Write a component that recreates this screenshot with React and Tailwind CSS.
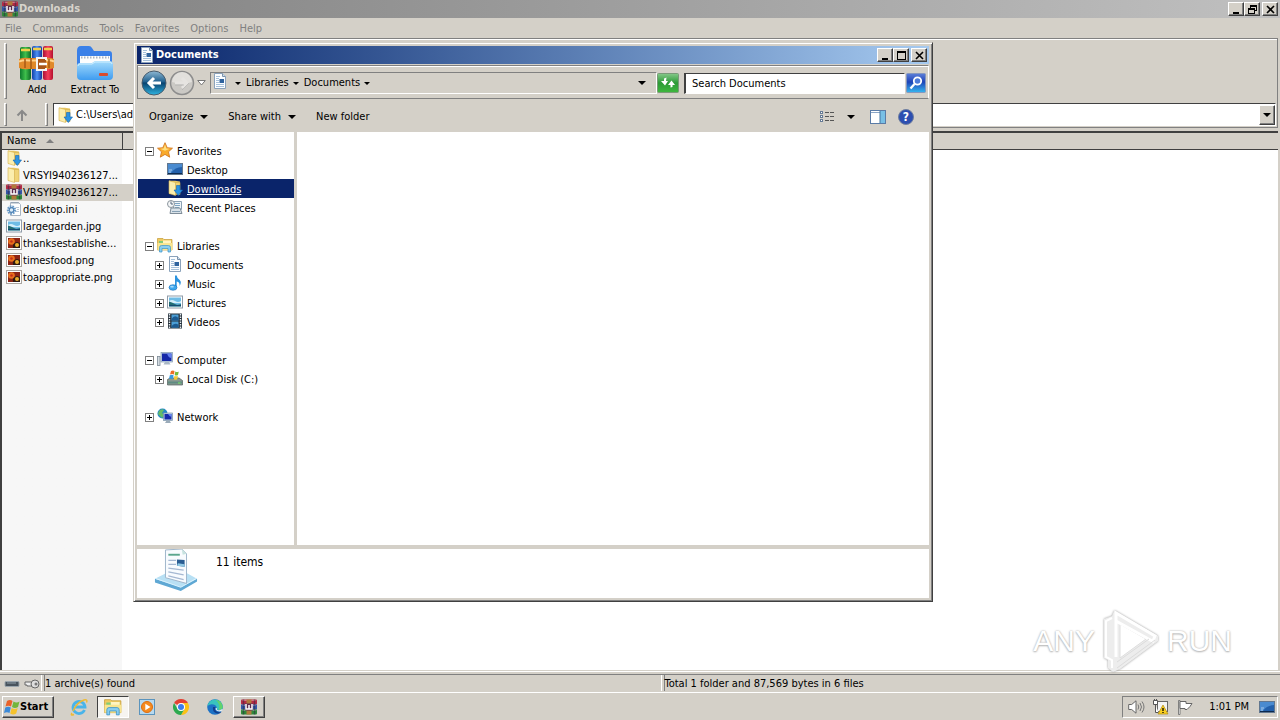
import React from "react";

/* ---------- icons ---------- */
function Books({ className = "size-4" }) {
  return (
    <svg viewBox="0 0 32 32" className={className} aria-hidden="true">
      <rect x="0" y="1" width="32" height="10" rx="2" fill="#b52b45" />
      <rect x="0" y="11" width="32" height="10" fill="#3557a8" />
      <rect x="0" y="21" width="32" height="10" rx="2" fill="#2f8a3b" />
      <path d="M3 3h26M3 13h26M3 23h26" stroke="#fff" strokeOpacity=".35" strokeWidth="2" />
      <path d="M5 1v30M27 1v30" stroke="#2a2440" strokeOpacity=".5" strokeWidth="3" />
      <rect x="11" y="1" width="10" height="30" fill="#b07a3c" />
      <rect x="8" y="9" width="16" height="14" fill="#5d2a4c" />
      <path d="M10 10v10h12V10M16 12v7" fill="none" stroke="#fff" strokeWidth="3" />
    </svg>
  );
}
function AddArchive() {
  return (
    <svg viewBox="0 0 36 36" className="size-9" aria-hidden="true">
      <defs>
        <linearGradient id="green-book"><stop offset="0" stopColor="#0d7a2c" /><stop offset=".5" stopColor="#3fbf4c" /><stop offset="1" stopColor="#0c6a25" /></linearGradient>
        <linearGradient id="blue-book"><stop offset="0" stopColor="#1140a8" /><stop offset=".5" stopColor="#4d90f5" /><stop offset="1" stopColor="#1238a0" /></linearGradient>
        <linearGradient id="red-book"><stop offset="0" stopColor="#a80f38" /><stop offset=".5" stopColor="#f5405a" /><stop offset="1" stopColor="#b5102f" /></linearGradient>
      </defs>
      <rect x="1" y="2" width="11" height="33" rx="2" fill="url(#green-book)" />
      <rect x="13" y="1" width="10" height="34" rx="2" fill="url(#blue-book)" />
      <rect x="24" y="1" width="10" height="34" rx="2" fill="url(#red-book)" />
      <path d="M2 5h9M14 4h8M25 4h8" stroke="#f2cf4c" strokeWidth="2.500" />
      <path d="M0 14q5-2 10-1h16q5-1 9 1v9q-5 2-9 1H10q-5 1-10-1z" fill="#e0892a" />
      <path d="M0 16.500q5-2 10-1h16q5-1 9 1" fill="none" stroke="#ffd28a" strokeWidth="2" />
      <path d="M6 14v9M12 13v11M30 14v9" stroke="#a85a14" strokeWidth="1.500" />
      <path d="M27 15v-2h-9v12h9v-2" fill="#a8561a" stroke="#f4f4f4" strokeWidth="2" />
      <path d="M20 19h8" stroke="#fff" strokeWidth="2.500" />
    </svg>
  );
}
function ExtractFolder() {
  return (
    <svg viewBox="0 0 40 36" className="h-9 w-10" aria-hidden="true">
      <defs>
        <linearGradient id="folder-front" x1="0" y1="0" x2="0" y2="1">
          <stop offset="0" stopColor="#a5dcfc" />
          <stop offset="1" stopColor="#3f9cf0" />
        </linearGradient>
      </defs>
      <path d="M2 6q0-5 4-5h8q2 0 3 2l2 3h15q3 0 3 3v12H2z" fill="#3a80e8" />
      <path d="M5 11h30v12H5z" fill="#fdfdfd" />
      <path d="M6 12.500h28" stroke="#a9b4c2" strokeWidth="2" strokeDasharray="1.500 1.500" />
      <path d="M2 21q0-3 3-3h12l3-2h14q4 0 4 3v12q0 4-4 4H6q-4 0-4-4z" fill="url(#folder-front)" />
      <path d="M3 21q0-2 2-2h12l3-2h14q3 0 3 2" fill="none" stroke="#d0efff" />
      <rect x="24" y="28" width="9" height="3" rx="1" fill="#d94b2f" />
    </svg>
  );
}
function Doc() {
  return (
    <svg viewBox="0 0 16 16" className="size-4" aria-hidden="true">
      <path d="M2.500.5h8l3 3v12h-11z" fill="#fbfdff" stroke="#8ba2bb" />
      <path d="M10.500.5v3h3" fill="#cfe0ef" stroke="#7b92ab" />
      <path d="M4 3.500h4M4 5.500h3M4 7.500h3M4 9.500h3M4 11.500h8M4 13.500h8" stroke="#a5c0da" />
      <rect x="7.500" y="6" width="4.500" height="4" fill="#2f639e" />
    </svg>
  );
}
function Folder({ down = false }) {
  return (
    <svg viewBox="0 0 16 16" className="size-4" aria-hidden="true">
      <path d="M2 .8h6l5 .7v12.500H2z" fill="#e8c765" />
      <path d="M8 2.500h5v12H8z" fill="#f0d478" stroke="#d5b04c" strokeWidth=".6" />
      <path d="M2 .8 8.500 2.500v13L2 13.500z" fill="#fbeeae" stroke="#d5b04c" strokeWidth=".6" />
      {down && <path d="M9.500 5.500h3.500v4.500h2.500l-4.200 5.500L7 10h2.500z" fill="#2c94e3" stroke="#1464ae" strokeWidth=".6" />}
    </svg>
  );
}
function Ini() {
  return (
    <svg viewBox="0 0 16 16" className="size-4" aria-hidden="true">
      <path d="M4.500 1.500h8l2 2v11h-10z" fill="#fff" stroke="#a8b4c2" />
      <path d="M6 1v2M8 1v2M10 1v2M12 1v2" stroke="#75879b" strokeWidth=".7" />
      <path d="M10 6.500h3M11 8.500h2M10 10.500h3" stroke="#b9c7d6" />
      <circle cx="5.500" cy="9" r="3.500" fill="none" stroke="#6c9cc9" strokeWidth="2.400" strokeDasharray="1.600 .8" />
      <circle cx="5.500" cy="9" r="2.300" fill="#dcecf8" stroke="#4f83b6" strokeWidth="1.200" />
    </svg>
  );
}
function Picture() {
  return (
    <svg viewBox="0 0 16 16" className="size-4" aria-hidden="true">
      <rect x=".5" y="2" width="15" height="12" fill="#fff" stroke="#8f9ba8" />
      <rect x="2" y="3.500" width="12" height="9" fill="#6fbce5" />
      <path d="M2 7q3-2 6 0t6 0v2H2z" fill="#d4effa" />
      <path d="M2 7.500q4 1 6 2.500t6 0v2.500H2z" fill="#236d73" />
      <path d="M2 11.500h12" stroke="#154b72" />
    </svg>
  );
}
function Png() {
  return (
    <svg viewBox="0 0 16 16" className="size-4" aria-hidden="true">
      <rect x=".5" y="1.500" width="15" height="13" fill="#fff" stroke="#a9a5a0" />
      <rect x="2" y="3" width="12" height="10" fill="#8c2415" />
      <circle cx="5.500" cy="6.500" r="3.300" fill="#e8701d" />
      <circle cx="5.500" cy="6.500" r="1.300" fill="#c4301a" />
      <path d="M7 13q-1-5 4-6l3 1v5z" fill="#2e1a12" />
      <circle cx="11" cy="10" r="2" fill="#e9ad2e" />
    </svg>
  );
}
function Star() {
  return (
    <svg viewBox="0 0 16 16" className="size-4" aria-hidden="true">
      <path d="m8 .7 2.200 5 5.300.5-4 3.600 1.200 5.400L8 12.400l-4.700 2.800 1.200-5.400-4-3.600 5.300-.5z" fill="#f9aa2b" stroke="#cf711a" strokeWidth=".8" />
      <path d="m8 2.500 1.400 4 3.400.3-4.800 2-4.800-2 3.400-.3z" fill="#ffdf7f" />
    </svg>
  );
}
function Desktop() {
  return (
    <svg viewBox="0 0 16 16" className="size-4" aria-hidden="true">
      <rect x=".5" y="2.500" width="15" height="11" fill="#2360ab" stroke="#62778f" />
      <path d="M1 3h14v3Q8 6 4 12H1z" fill="#4a8bd0" />
      <path d="M1 12.500h14" stroke="#0c294e" />
      <path d="M2 9h3M2 11h2" stroke="#d4e8fb" strokeWidth=".7" />
    </svg>
  );
}
function Recent() {
  return (
    <svg viewBox="0 0 16 16" className="size-4" aria-hidden="true">
      <path d="M6.500 2.500h8v8h-8z" fill="#eef4f8" stroke="#8ca1b3" />
      <path d="M8 4.500h5M8 6.500h5M8 8.500h4" stroke="#7fa5c2" />
      <path d="M4 9h9l2 5.500H3z" fill="#d9e2e9" stroke="#7f8d99" />
      <path d="M5 12.500h8" stroke="#86a0b4" />
      <circle cx="4" cy="5" r="3.500" fill="#f4f6f7" stroke="#8a949c" />
      <path d="M4 2.500V5h2" fill="none" stroke="#54677a" />
    </svg>
  );
}
function LibrariesIcon({ className = "size-4" }) {
  return (
    <svg viewBox="0 0 16 16" className={className} aria-hidden="true">
      <path d="M.5 1.500h5.500l1 1h8V13H.5z" fill="#efcb62" stroke="#c49a34" strokeWidth=".7" />
      <path d="M2 4h12v4H2z" fill="#82cb76" />
      <path d="M6 3.500h8v3H6z" fill="#fff4c2" />
      <path d="M.5 6h15v7H.5z" fill="#f9e58f" />
      <path d="M2.500 15v-4.500q0-2 2-2h7q2 0 2 2V15H11v-3.500H5V15z" fill="#88cdf0" stroke="#3b93c7" strokeWidth=".7" />
    </svg>
  );
}
function Music() {
  return (
    <svg viewBox="0 0 16 16" className="size-4" aria-hidden="true">
      <path d="M8 .5h1.700q.3 3 3 4.500Q15 7 12.500 11q.7-4-2.800-4.500v5.700H8z" fill="#2b93df" />
      <ellipse cx="6" cy="12.500" rx="4" ry="2.800" fill="#3ba7ee" stroke="#1b6fb9" strokeWidth=".6" />
      <ellipse cx="5" cy="11.700" rx="1.800" ry=".9" fill="#a9dcfb" />
    </svg>
  );
}
function Video() {
  return (
    <svg viewBox="0 0 16 16" className="size-4" aria-hidden="true">
      <rect x="1" y=".5" width="14" height="15" fill="#27323c" />
      <path d="M2.500 1v14M13.500 1v14" stroke="#e1e8ed" strokeWidth="1.400" strokeDasharray="1.500 1" />
      <path d="M4.500 1.500h7v6h-7zM4.500 8.500h7v6h-7z" fill="#4c9fd6" />
      <path d="M4.500 6q3-5 7-1v2.500h-7zM4.500 13q4-4 7-1v2.500h-7z" fill="#1c5b91" />
    </svg>
  );
}
function Computer() {
  return (
    <svg viewBox="0 0 16 16" className="size-4" aria-hidden="true">
      <rect x=".5" y="5.500" width="2.500" height="9" fill="#d6dde3" stroke="#7c8995" strokeWidth=".8" />
      <rect x="4" y="1.500" width="11.500" height="9.500" fill="#c4d5e5" stroke="#8299b0" strokeWidth=".7" />
      <path d="M5 2.500h9.500V10H5z" fill="#1528a8" />
      <path d="M10 2.500h4.500v4.500q-3 0-4.500-4.500" fill="#627fee" />
      <path d="M8 11h4l1.500 2.500h-7z" fill="#a9b7c5" />
    </svg>
  );
}
function Disk() {
  return (
    <svg viewBox="0 0 16 16" className="size-4" aria-hidden="true">
      <path d="M.5 9.500 3 8h9l3.500 2.500v4.500H.5z" fill="#8b9a92" stroke="#4f5e5b" strokeWidth=".7" />
      <path d="M1 11.500h14v2H1z" fill="#5f8c82" />
      <path d="M11 13h2.500" stroke="#7cf060" />
      <path d="M4 1q2-1 3.500 0L7 4.500Q5 3.500 3 4.500z" fill="#ee6d26" />
      <path d="M8.300 1.400q2 1 3.500 0L11 5q-2 1-3.300 0z" fill="#77bb38" />
      <path d="M2.800 5.300q2-1 3.800 0L6 9q-2-1-4 0z" fill="#379be0" />
      <path d="M7.500 5.700q2 1 3.500 0l-.8 3.600q-1.500 1-3.400 0z" fill="#f7c830" />
    </svg>
  );
}
function Network() {
  return (
    <svg viewBox="0 0 16 16" className="size-4" aria-hidden="true">
      <circle cx="5.500" cy="5.500" r="5" fill="#2389c6" />
      <path d="M2 3q3-3 5-1L5 5l2 2-2 3-4-4z" fill="#66bb68" />
      <rect x="6.500" y="5" width="9" height="7.500" fill="#c4d6e6" stroke="#7890a9" strokeWidth=".7" />
      <path d="M7.500 6h7v5.500h-7z" fill="#1728ad" />
      <path d="M11 6h3.500v3q-2-.5-3.500-3" fill="#6587ef" />
      <path d="M9.500 12.500h3l1.500 2.500H8z" fill="#9babb9" />
    </svg>
  );
}
function BigLibrary() {
  return (
    <svg viewBox="0 0 46 46" className="size-11" aria-hidden="true">
      <path d="m1 31 12-6h21l11 6-17 10z" fill="#b8e0f4" />
      <path d="m1 31 27 9 17-9v3L28 44 1 35z" fill="#5fa8d4" />
      <path d="m2 31 26 9 16-9" fill="none" stroke="#def4ff" />
      <path d="m12 1 17-1 5 5v31l-22-6z" fill="#f8fbfe" stroke="#9cb3c9" />
      <path d="m29 0 1 6 4-1z" fill="#c7e3df" />
      <path d="M15 6h12" stroke="#5ba68e" strokeWidth="2" />
      <path d="M15 12h8M15 16h8M15 20l16 2M15 24l16 3M15 28l16 4" stroke="#a5b8d2" strokeWidth="1.300" />
      <path d="m24 11 8 .5v7l-8-1z" fill="#2a5d93" />
      <path d="m25 15 7 1v2.500l-8-1z" fill="#91c9e5" />
    </svg>
  );
}
function BackArrow() {
  return (
    <svg viewBox="0 0 26 26" className="size-[26px]" aria-hidden="true">
      <defs>
        <linearGradient id="back" x1="0" y1="0" x2="0" y2="1">
          <stop offset="0" stopColor="#8fb9d4" />
          <stop offset=".45" stopColor="#21618f" />
          <stop offset=".5" stopColor="#09436f" />
          <stop offset="1" stopColor="#2fb4e2" />
        </linearGradient>
      </defs>
      <circle cx="13" cy="13" r="12" fill="url(#back)" stroke="#4a5c6c" />
      <path d="M20 13H8m5-5-5 5 5 5" fill="none" stroke="#fff" strokeWidth="3" />
    </svg>
  );
}
function ForwardArrow() {
  return (
    <svg viewBox="0 0 26 26" className="size-[26px]" aria-hidden="true">
      <circle cx="13" cy="13" r="11.500" fill="#cbc9c5" stroke="#8d8d8d" strokeWidth="1.500" />
      <path d="M3 12a10 10 0 0 1 20 0q-10 3-20 0" fill="#e2e0dc" />
      <path d="M6 13h12m-5-5 5 5-5 5" fill="none" stroke="#e6e4e1" strokeWidth="3" />
      <path d="M6 15h9M13 20l7-7" fill="none" stroke="#aaa" strokeWidth=".6" />
    </svg>
  );
}
function Down() {
  return (
    <svg viewBox="0 0 8 4" className="h-1 w-2 shrink-0" aria-hidden="true">
      <path d="M0 0h8L4 4z" fill="#000" />
    </svg>
  );
}
function SmallDown() {
  return (
    <svg viewBox="0 0 6 3" className="h-[3px] w-1.5 shrink-0" aria-hidden="true">
      <path d="M0 0h6L3 3z" fill="#000" />
    </svg>
  );
}
function WinGlyph({ kind }) {
  return (
    <svg viewBox="0 0 11 11" className="size-[11px]" aria-hidden="true" shapeRendering="crispEdges">
      {kind === "min" && <path d="M2 8h6v2H2z" />}
      {kind === "max" && <path d="M1 1h9v9H1zM2 3v6h7V3z" fillRule="evenodd" />}
      {kind === "restore" && <path d="M3 1h7v6H8v3H1V4h2zM4 3v1h4v2h1V3zM2 6v3h5V6z" fillRule="evenodd" />}
      {kind === "close" && <path d="M2 2l7 7M9 2l-7 7" stroke="#000" strokeWidth="1.600" shapeRendering="auto" />}
    </svg>
  );
}

/* ---------- shared parts ---------- */
const RAISED =
  "border border-t-white border-l-white border-r-[#404040] border-b-[#404040] bg-[#d4d0c8] shadow-[inset_-1px_-1px_0_#808080]";

function WindowButtons({ middle }) {
  const button = `flex h-3.5 w-4 items-center justify-center ${RAISED}`;
  return (
    <div className="flex shrink-0 pr-0.5">
      <button className={button} aria-label="Minimize"><WinGlyph kind="min" /></button>
      <button className={button} aria-label={middle === "max" ? "Maximize" : "Restore"}><WinGlyph kind={middle} /></button>
      <button className={`ml-0.5 ${button}`} aria-label="Close"><WinGlyph kind="close" /></button>
    </div>
  );
}

function Grip({ className = "" }) {
  return <div className={`w-[3px] shrink-0 border border-t-white border-l-white border-r-[#808080] border-b-[#808080] ${className}`} />;
}

/* ---------- archive manager ---------- */
const FILES = [
  { name: "..", icon: <Folder down /> },
  { name: "VRSYI940236127...", icon: <Folder /> },
  { name: "VRSYI940236127...", icon: <Books />, selected: true },
  { name: "desktop.ini", icon: <Ini /> },
  { name: "largegarden.jpg", icon: <Picture /> },
  { name: "thanksestablishe...", icon: <Png /> },
  { name: "timesfood.png", icon: <Png /> },
  { name: "toappropriate.png", icon: <Png /> },
];

function ArchiveManager() {
  return (
    <main className="flex min-h-0 grow flex-col">
      <header className="flex h-[18px] shrink-0 items-center bg-linear-to-r from-[#808080] to-[#c0c0c0] pl-0.5">
        <Books />
        <h1 className="grow pl-px font-bold text-[#d8d4cc]">Downloads</h1>
        <WindowButtons middle="restore" />
      </header>
      <nav className="flex h-5 shrink-0 items-center gap-[11px] px-[5px] pt-0.5 text-[#808080]">
        {["File", "Commands", "Tools", "Favorites", "Options", "Help"].map((m) => (
          <button key={m}>{m}</button>
        ))}
      </nav>
      <section className="mr-0.5 shrink-0 border-y border-r border-[#808080] pb-px shadow-[inset_0_1px_0_#fff]">
        <div className="flex h-16 gap-2 pt-1 pl-1">
          <Grip className="mb-1" />
          <button className="flex w-11 flex-col items-center pt-0.5">
            <AddArchive />
            <span className="pt-px leading-4">Add</span>
          </button>
          <button className="flex w-14 flex-col items-center pt-0.5">
            <ExtractFolder />
            <span className="pt-px leading-4 whitespace-nowrap">Extract To</span>
          </button>
        </div>
        <div className="flex h-[23px] items-stretch pl-1">
          <Grip />
          <button className="flex w-[30px] items-center justify-center" aria-label="Up one level">
            <svg viewBox="0 0 12 12" className="size-3" aria-hidden="true">
              <path d="M6 12V2M1.500 6.500 6 2l4.500 4.500" fill="none" stroke="#898989" strokeWidth="2" />
            </svg>
          </button>
          <Grip className="ml-2" />
          <div className="mr-px ml-[5px] flex grow items-center border border-t-[#404040] border-l-[#404040] border-r-white border-b-white bg-white pl-[3px]">
            <Folder down />
            <input aria-label="Path" defaultValue="C:\Users\admin\Downloads" className="w-0 grow bg-transparent pt-px pl-[3px] outline-none" />
            <button className={`flex h-5 w-4 items-center justify-center ${RAISED}`} aria-label="Path history"><Down /></button>
          </div>
        </div>
      </section>
      <section className="mt-[3px] mr-0.5 flex min-h-0 grow flex-col overflow-hidden border-t-2 border-l-2 border-[#404040] bg-white bg-linear-to-r from-[#f7f7f7] from-[120px] to-white to-[120px]">
        <table className="w-full table-fixed border-collapse">
          <colgroup>
            <col className="w-[120px]" />
            <col className="w-[400px]" />
            <col />
          </colgroup>
          <thead>
            <tr className="h-4 bg-[#d4d0c8]">
              <th className="border-r border-b border-[#404040] p-0 pl-[5px] text-left font-normal">
                <span className="flex h-[15px] items-center gap-2.5">
                  Name
                  <svg viewBox="0 0 8 4" className="h-1 w-2" aria-hidden="true"><path d="M0 4h8L4 0z" fill="#808080" /></svg>
                </span>
              </th>
              <th className="border-b border-l border-b-[#404040] border-l-white p-0" />
              <th className="border-b border-[#404040] p-0" />
            </tr>
          </thead>
          <tbody>
            {FILES.map((f, i) => (
              <tr key={i} className="h-[17px]">
                <td className={`p-0 pl-1 whitespace-nowrap ${f.selected ? "bg-[#d4d0c8]" : ""}`}>
                  <span className="flex h-[17px] items-center gap-px">
                    <span className="shrink-0">{f.icon}</span>
                    <span className="pt-px">{f.name}</span>
                  </span>
                </td>
                <td className={`p-0 ${f.selected ? "bg-[#d4d0c8]" : ""}`} />
                <td className="p-0" />
              </tr>
            ))}
          </tbody>
        </table>
      </section>
      <div className="mt-px h-px shrink-0 bg-white" />
      <footer className="mt-0.5 flex h-[18px] shrink-0 gap-0.5 border-t border-[#808080]">
        <div className="flex w-[42px] items-center gap-1 border-r border-white pl-1">
          <svg viewBox="0 0 16 8" className="h-2 w-4" aria-hidden="true">
            <rect x="1" y="1.500" width="14" height="5" rx="1" fill="#49545e" stroke="#9ba6ae" />
            <path d="M3 3h9" stroke="#8f9da8" />
          </svg>
          <svg viewBox="0 0 16 10" className="h-2.5 w-4" aria-hidden="true">
            <path d="M7 3H1v3h2v1h5" fill="#eee" stroke="#666" />
            <circle cx="11" cy="5" r="4" fill="#ddd" stroke="#666" />
            <circle cx="12" cy="5" r="1.500" fill="#777" />
          </svg>
        </div>
        <p className="flex grow basis-0 items-center border-r border-l border-r-white border-l-[#808080]">1 archive(s) found</p>
        <p className="flex grow basis-0 items-center border-l border-[#808080]">Total 1 folder and 87,569 bytes in 6 files</p>
      </footer>
    </main>
  );
}

/* ---------- file explorer ---------- */
const TREE = [
  {
    name: "Favorites", icon: <Star />, open: true,
    items: [
      { name: "Desktop", icon: <Desktop /> },
      { name: "Downloads", icon: <Folder down />, selected: true },
      { name: "Recent Places", icon: <Recent /> },
    ],
  },
  {
    name: "Libraries", icon: <LibrariesIcon />, open: true,
    items: [
      { name: "Documents", icon: <Doc />, branch: true },
      { name: "Music", icon: <Music />, branch: true },
      { name: "Pictures", icon: <Picture />, branch: true },
      { name: "Videos", icon: <Video />, branch: true },
    ],
  },
  { name: "Computer", icon: <Computer />, open: true, items: [{ name: "Local Disk (C:)", icon: <Disk />, branch: true }] },
  { name: "Network", icon: <Network />, open: false, items: [] },
];

function Toggle({ open }) {
  return (
    <svg viewBox="0 0 9 9" className="size-[9px] shrink-0" aria-hidden="true" shapeRendering="crispEdges">
      <path d="M.5.5h8v8h-8z" fill="#fff" stroke="#808080" />
      <path d={open ? "M2 4h5v1H2z" : "M2 4h2V2h1v2h2v1H5v2H4V5H2z"} />
    </svg>
  );
}

function Tree() {
  return (
    <ul className="flex flex-col gap-[19px] pt-[9px] pl-px">
      {TREE.map((group) => (
        <li key={group.name}>
          <button className="flex h-[19px] w-full items-center pt-0.5 pl-[7px]">
            <Toggle open={group.open} />
            <span className="pr-1 pb-1 pl-[3px]">{group.icon}</span>
            {group.name}
          </button>
          <ul>
            {group.items.map((item) => (
              <li key={item.name}>
                <button className={`flex h-[19px] w-full items-center pt-0.5 pl-[17px] ${item.selected ? "bg-[#0a246a] text-white underline" : ""}`}>
                  {item.branch ? <Toggle /> : <span className="w-[9px]" />}
                  <span className="pr-1 pb-1 pl-[3px]">{item.icon}</span>
                  {item.name}
                </button>
              </li>
            ))}
          </ul>
        </li>
      ))}
    </ul>
  );
}

function Explorer() {
  return (
    <section className="absolute top-[42px] left-[133px] flex h-[560px] w-[800px] flex-col border-t border-r border-b border-l border-t-[#d4d0c8] border-r-[#404040] border-b-[#404040] border-l-[#d4d0c8] bg-[#d4d0c8] p-[3px] shadow-[inset_1px_1px_0_#fff,inset_-1px_-1px_0_#808080]">
      <header className="flex h-[18px] shrink-0 items-center bg-linear-to-r from-[#0a246a] to-[#a6caf0] pl-0.5">
        <Doc />
        <h2 className="grow pl-px font-bold text-white">Documents</h2>
        <WindowButtons middle="max" />
      </header>
      <div className="mt-px flex h-[34px] shrink-0 items-center border border-t-[#808080] border-l-[#808080] border-r-white border-b-[#808080] pt-0.5 pr-0.5 pl-[3px] shadow-[inset_0_1px_0_#fff]">
        <button aria-label="Back"><BackArrow /></button>
        <button aria-label="Forward" className="ml-0.5"><ForwardArrow /></button>
        <button aria-label="Recent pages" className="ml-0.5">
          <svg viewBox="0 0 9 6" className="h-1.5 w-[9px]" aria-hidden="true">
            <path d="M.7.5h7.600L4.500 5z" fill="#fff" stroke="#777" />
          </svg>
        </button>
        <div className="ml-1 flex h-[22px] grow items-center border border-t-[#808080] border-l-[#808080] border-r-white border-b-white">
          <span className="pb-1 pl-px"><Doc /></span>
          <button className="ml-[7px] flex items-center gap-[5px]" aria-label="Libraries"><SmallDown /><span>Libraries</span></button>
          <button className="ml-1 flex items-center gap-[5px]" aria-label="Documents"><SmallDown /><span>Documents</span></button>
          <button className="ml-1" aria-label="Subfolders"><SmallDown /></button>
          <button className="mr-2.5 ml-auto" aria-label="Previous locations"><Down /></button>
        </div>
        <button aria-label="Refresh">
          <svg viewBox="0 0 22 20" className="h-5 w-[22px]" aria-hidden="true">
            <defs>
              <linearGradient id="refresh" x1="0" y1="0" x2="0" y2="1">
                <stop offset="0" stopColor="#86c98a" />
                <stop offset=".5" stopColor="#2c9a36" />
                <stop offset="1" stopColor="#3fb83e" />
              </linearGradient>
            </defs>
            <rect x=".5" y=".5" width="21" height="19" rx="1" fill="url(#refresh)" stroke="#7a9a78" />
            <path d="M9.500 4.500 7 5.500V8H4l4 4.500L11 8H9zM14.500 7.500 11 12h2.500v2.500l2-.5v-2H18z" fill="#fff" />
          </svg>
        </button>
        <input
          aria-label="Search Documents"
          placeholder="Search Documents"
          className="ml-[5px] h-[21px] w-[221px] border border-t-[#404040] border-l-2 border-l-[#404040] border-r-white border-b-white bg-white px-1.5 text-black outline-none placeholder:text-black"
        />
        <button className="ml-px" aria-label="Search">
          <svg viewBox="0 0 20 20" className="size-5" aria-hidden="true">
            <defs>
              <linearGradient id="search" x1="0" y1="0" x2="0" y2="1">
                <stop offset="0" stopColor="#5d7fd8" />
                <stop offset=".45" stopColor="#1e44b8" />
                <stop offset="1" stopColor="#36b8f0" />
              </linearGradient>
            </defs>
            <rect x=".5" y=".5" width="19" height="19" rx="1" fill="url(#search)" stroke="#8597bf" />
            <circle cx="11.500" cy="8" r="3.700" fill="#4e7bd8" stroke="#fff" strokeWidth="1.800" />
            <path d="m8.500 11-4 4.500" stroke="#fff" strokeWidth="2.300" />
          </svg>
        </button>
      </div>
      <div className="flex h-[33px] shrink-0 items-center pt-0.5 pl-3">
        <button className="flex items-center gap-[7px]">Organize <Down /></button>
        <button className="ml-5 flex items-center gap-[7px]">Share with <Down /></button>
        <button className="ml-5">New folder</button>
        <button className="ml-auto" aria-label="Change view">
          <svg viewBox="0 0 16 12" className="h-3 w-4" aria-hidden="true" shapeRendering="crispEdges">
            <path d="M1.500.5h2v2h-2zM1.500 4.500h2v2h-2zM1.500 8.500h2v2h-2z" fill="#fff" stroke="#667b96" />
            <path d="M6 1.500h9M6 5.500h9M6 9.500h9" stroke="#555" strokeDasharray="4 1" />
          </svg>
        </button>
        <button className="ml-3" aria-label="More views"><Down /></button>
        <button className="ml-[15px]" aria-label="Preview pane">
          <svg viewBox="0 0 16 14" className="h-3.5 w-4" aria-hidden="true">
            <rect x=".5" y=".5" width="15" height="13" fill="#fff" stroke="#5a7ba6" />
            <path d="M1 2.500h14" stroke="#8aa5c6" />
            <rect x="10" y="1" width="5" height="12" fill="#78bfe5" />
            <path d="M10 1v12" stroke="#42749f" />
          </svg>
        </button>
        <button className="mr-[15px] ml-3" aria-label="Help">
          <span className="flex size-4 items-center justify-center rounded-full border border-[#71809f] bg-[#2d4fb0] text-xs leading-none font-bold text-white">?</span>
        </button>
      </div>
      <div className="flex min-h-0 grow bg-white">
        <nav className="w-[157px] shrink-0"><Tree /></nav>
        <div className="w-[3px] bg-[#d4d0c8]" />
        <div className="grow" />
      </div>
      <footer className="flex h-[53px] shrink-0 gap-[18px] border-t-4 border-[#d4d0c8] bg-white pl-[17px]">
        <BigLibrary />
        <p className="pt-[5px] text-xs">11 items</p>
      </footer>
    </section>
  );
}

/* ---------- taskbar ---------- */
function Flag() {
  return (
    <svg viewBox="0 0 16 16" className="size-4" aria-hidden="true">
      <path d="M3 2q3-2 5.500 0L7 7.500Q4.500 6 1.500 7.500z" fill="#e9622a" />
      <path d="M9.500 2.500q3 2 6 0L14 8q-3 2-6 0z" fill="#72b63b" />
      <path d="M1.300 8.500q3-1.500 5.500 0L5.500 14Q3 12.500 0 14z" fill="#3c8ad8" />
      <path d="M7.700 9q3 2 6 0l-1.500 5.500q-3 2-6 0z" fill="#f5c22b" />
    </svg>
  );
}
function IE() {
  return (
    <svg viewBox="0 0 18 18" className="size-[18px]" aria-hidden="true">
      <path d="M14.500 12a6 6 0 1 1 .5-3H5" fill="none" stroke="#49b4ea" strokeWidth="2.800" />
      <path d="M2 15Q0 18 4 16.500M3 13Q7 4 14 2q4-1 2.500 2.500" fill="none" stroke="#efba32" strokeWidth="1.400" />
    </svg>
  );
}
function MediaPlayer() {
  return (
    <svg viewBox="0 0 16 16" className="size-4" aria-hidden="true">
      <rect x=".5" y=".5" width="15" height="15" fill="#b7d9ef" stroke="#5b94bd" />
      <circle cx="8" cy="8" r="5.500" fill="#f58a1f" stroke="#dd6d10" />
      <path d="M6.300 4.800 11.500 8l-5.200 3.200z" fill="#fff" />
    </svg>
  );
}
function Chrome() {
  return (
    <svg viewBox="0 0 16 16" className="size-4" aria-hidden="true">
      <path d="M8 8 1.070 4A8 8 0 0 1 14.930 4z" fill="#e34133" />
      <path d="M8 8V4h6.930A8 8 0 0 1 8 16l3.500-6z" fill="#fbc116" />
      <path d="M8 8l3.460 2L8 16A8 8 0 0 1 1.070 4L4.540 10z" fill="#2da94f" />
      <circle cx="8" cy="8" r="4" fill="#fff" />
      <circle cx="8" cy="8" r="3" fill="#3b7ded" />
    </svg>
  );
}
function Edge() {
  return (
    <svg viewBox="0 0 16 16" className="size-4" aria-hidden="true">
      <circle cx="8" cy="8" r="7.800" fill="#1d72c6" />
      <path d="M.3 7A7.800 7.800 0 0 1 15.800 8q0 3-3.500 3-3 0-2.500-1.500T8 6Q4 4 .3 7" fill="#39c3bf" />
      <path d="M9 1q6 1 6.800 7-.5 3-4 2.800Q14 6 9 1" fill="#63d36d" />
      <path d="M6 8q-1 5 4 6.500 3 .5 4.500-1.500Q9 14 8 10q0-1 .5-2z" fill="#123f8d" />
      <path d="M15.500 10.500q-2 2-5 1-2-1-1-2.500" fill="none" stroke="#e7eef2" strokeWidth="1.200" />
    </svg>
  );
}

const APPS = [
  { name: "Internet Explorer", icon: <IE /> },
  { name: "Windows Explorer", icon: <LibrariesIcon className="size-[18px]" />, state: "pressed" },
  { name: "Media Player", icon: <MediaPlayer /> },
  { name: "Chrome", icon: <Chrome /> },
  { name: "Edge", icon: <Edge /> },
  { name: "Archive manager", icon: <Books />, state: "raised" },
];

function appStyle(state) {
  if (state === "pressed") return "border border-t-[#404040] border-l-[#404040] border-r-white border-b-white bg-[#f6f4f0]";
  if (state === "raised") return RAISED;
  return "";
}

function Taskbar() {
  return (
    <footer className="flex h-7 shrink-0 items-center border-t border-white bg-[#d4d0c8] pt-px pr-0.5 pl-0.5 shadow-[0_-1px_0_#d4d0c8]">
      <button className={`flex h-[22px] w-[52px] items-center pl-px font-bold ${RAISED}`}><Flag />Start</button>
      <div className="ml-[9px] flex gap-0.5">
        {APPS.map((a) => (
          <button key={a.name} aria-label={a.name} className={`flex h-[22px] w-8 items-center justify-center ${appStyle(a.state)}`}>
            {a.icon}
          </button>
        ))}
      </div>
      <div className="ml-auto flex h-[22px] items-center border border-t-[#808080] border-l-[#808080] border-r-white border-b-white pl-[5px]">
        <svg viewBox="0 0 17 14" className="h-3.5 w-[17px]" aria-hidden="true">
          <path d="M.7 4.500h3L8 .8v12.400L3.700 9.500h-3z" fill="#fff" stroke="#666" />
          <path d="M10 4.500q1.500 2.500 0 5M12 3q3 4 0 8M14 1.500q4 5.500 0 11" fill="none" stroke="#777" />
        </svg>
        <svg viewBox="0 0 17 16" className="ml-[7px] h-4 w-[17px]" aria-hidden="true">
          <rect x="5.500" y="2.500" width="10" height="10" fill="#f4f4f4" stroke="#666" />
          <path d="M1.500 1.500h4v4h-4zM3.500 5.500v8h3M2.500 0v2M4.500 0v2" fill="#fff" stroke="#555" />
          <path d="m11 6 5 9H6z" fill="#f9cf20" stroke="#b08a10" strokeWidth=".7" />
          <path d="M11 9v3M11 13v1" stroke="#000" strokeWidth="1.300" />
        </svg>
        <svg viewBox="0 0 16 15" className="ml-2 h-[15px] w-4" aria-hidden="true">
          <path d="M1.500.5h1.500v14H1.500z" fill="#fff" stroke="#666" strokeWidth=".8" />
          <path d="M3 1.500h6v2h6l-2 3-3 3H8v-1H3z" fill="#fff" stroke="#666" />
        </svg>
        <time className="ml-4">1:01 PM</time>
        <button className="mr-0.5 ml-2.5" aria-label="Show desktop"><Desktop /></button>
      </div>
    </footer>
  );
}

function Watermark() {
  return (
    <div className="pointer-events-none absolute right-12 bottom-12 flex items-center gap-2 font-['Liberation_Sans',sans-serif] text-3xl text-white [text-shadow:0_0_2px_#aaa,0_1px_2px_#bbb]">
      <span>ANY</span>
      <svg viewBox="0 0 56 62" className="h-[62px] w-14 drop-shadow-[0_0_1px_#999]" aria-hidden="true">
        <path d="M11 1 55 26v5L17 59l-7 3-5-4V50l-4-2V9l8-3z" fill="#ededed" />
        <path d="M17 14v34l26-19z" fill="#fff" stroke="#dedede" />
        <path d="M13 47V3l39 23-2 5M13 11l38 21" fill="none" stroke="#fff" strokeWidth="3" />
        <path d="M9 8 3 11v36l6 3v8" fill="none" stroke="#fff" strokeWidth="2" />
        <path d="M52 30 14 58M46 29 14 52" fill="none" stroke="#dcdcdc" />
      </svg>
      <span>RUN</span>
    </div>
  );
}

export default function App() {
  return (
    <div className="relative flex h-screen flex-col overflow-hidden bg-[#d4d0c8] font-['DejaVu_Sans_Condensed','Noto_Sans',sans-serif] text-[11px] leading-4 text-black">
      <ArchiveManager />
      <Taskbar />
      <Watermark />
      <Explorer />
    </div>
  );
}
